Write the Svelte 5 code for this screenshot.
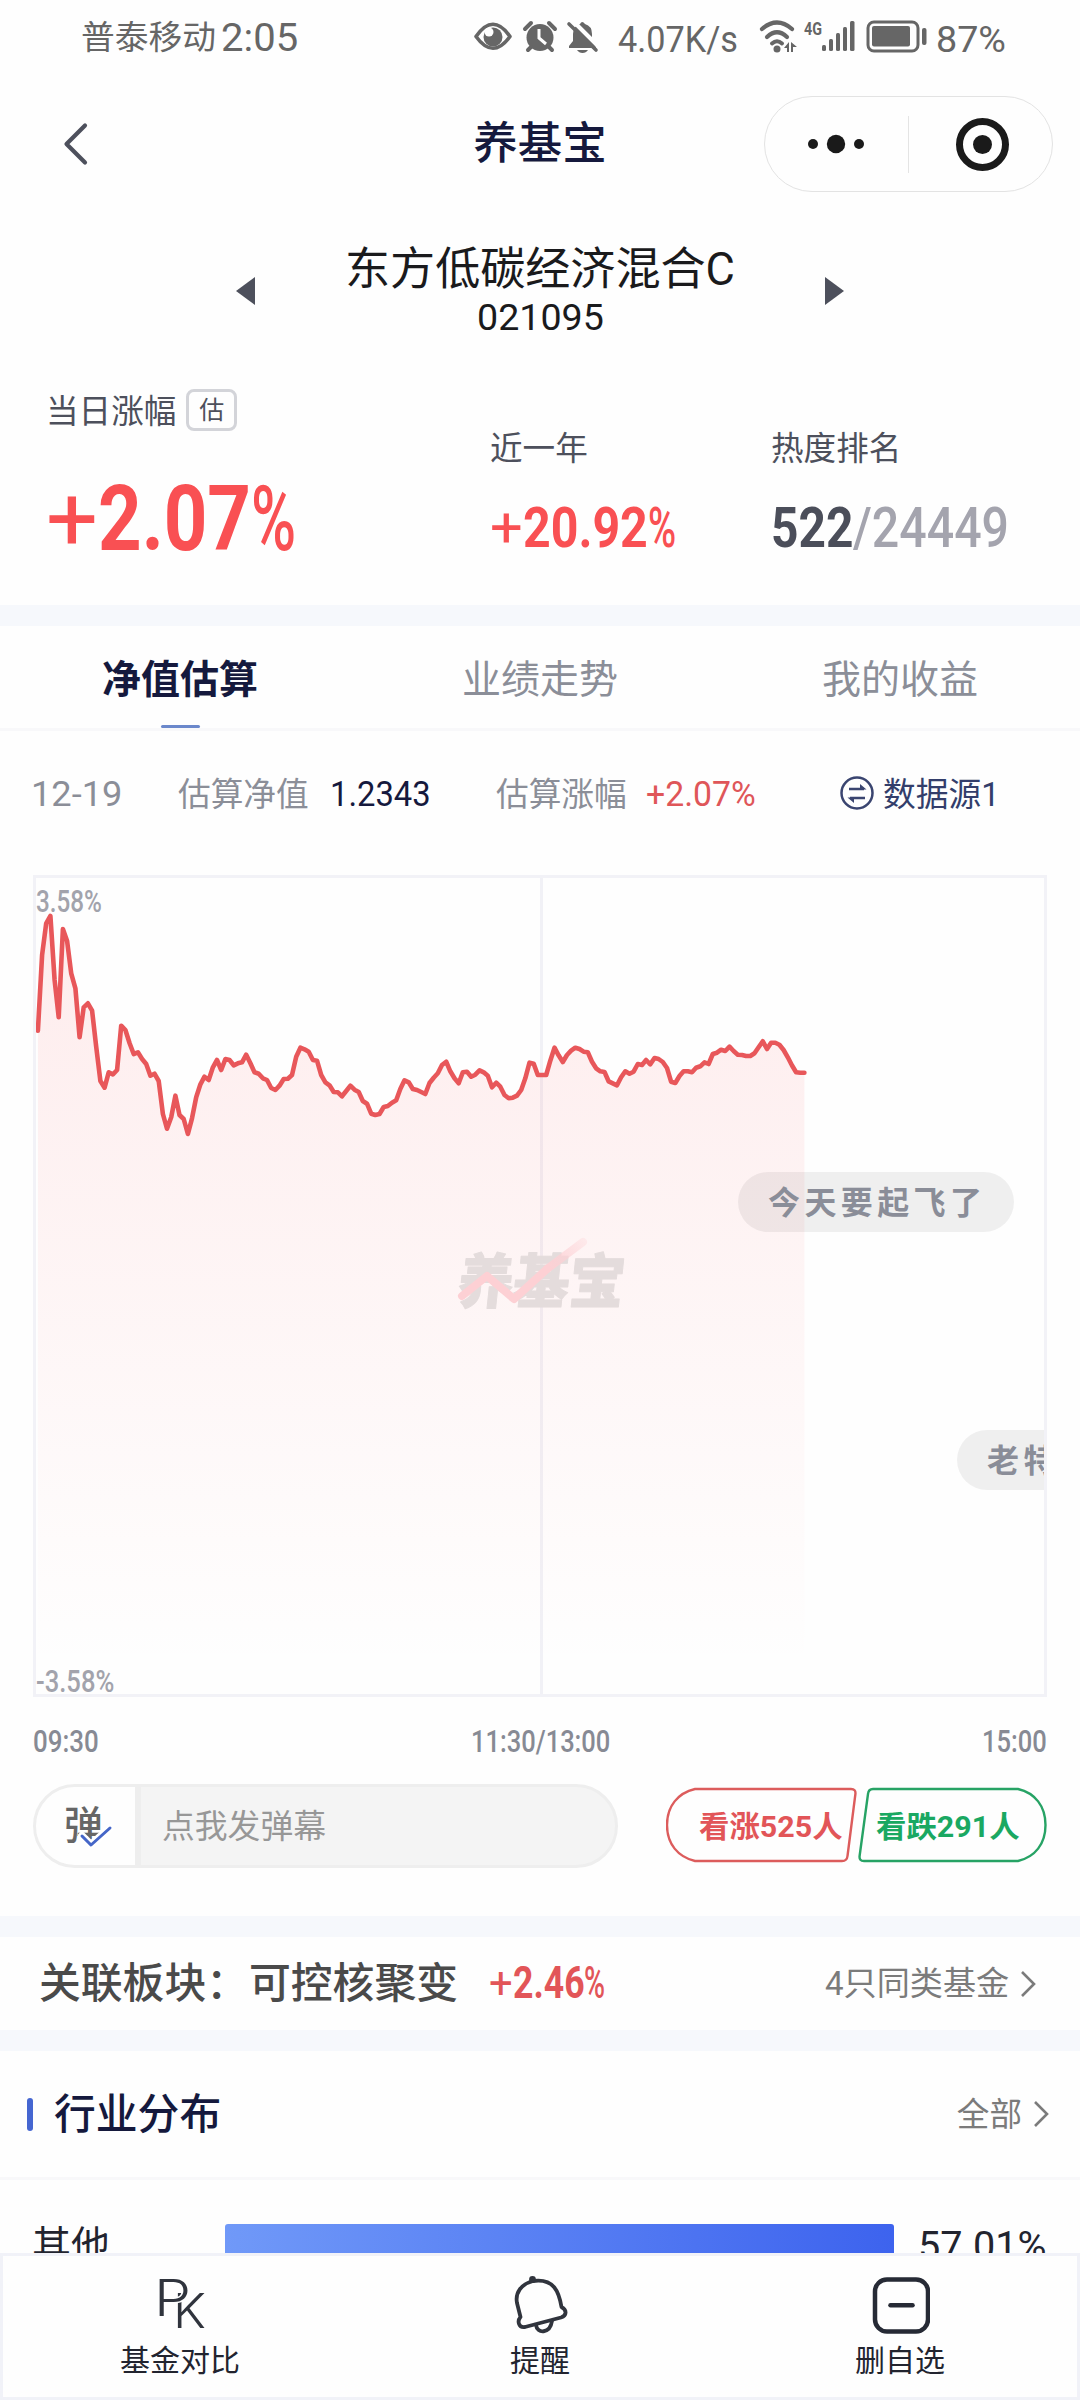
<script lang="ts">
  // Condenses or widens a text run to a set advance width while keeping it in the flow.
  function fit(node: HTMLElement, width: number) {
    const natural = node.offsetWidth;
    node.style.transform = `scaleX(${width / natural})`;
    node.style.marginRight = `${width - natural}px`;
  }

  // One sample per trading minute, in thirds of a pixel from the series origin.
  const samples = [
    512, 285, 190, 168, 360, 472, 207, 243, 340, 385, 532, 442, 430, 452, 560, 663, 683, 637, 643, 630,
    497, 510, 550, 582, 577, 597, 612, 647, 641, 663, 762, 806, 772, 707, 765, 777, 822, 775, 712, 673,
    650, 660, 622, 600, 630, 597, 600, 616, 610, 607, 584, 610, 637, 641, 655, 660, 684, 690, 677, 657,
    656, 645, 590, 563, 568, 575, 600, 602, 645, 667, 676, 696, 697, 709, 693, 677, 689, 696, 723, 731,
    761, 765, 762, 741, 738, 728, 721, 687, 661, 667, 687, 690, 696, 702, 669, 653, 640, 615, 605, 634,
    655, 670, 637, 635, 650, 644, 631, 637, 647, 682, 668, 680, 705, 715, 713, 707, 690, 655, 608, 611,
    645, 645, 645, 602, 563, 586, 606, 585, 572, 563, 567, 575, 577, 605, 625, 634, 636, 664, 670, 676,
    652, 634, 641, 635, 612, 615, 600, 613, 594, 597, 606, 624, 665, 669, 648, 634, 634, 637, 623, 619,
    607, 612, 582, 578, 569, 573, 560, 573, 584, 585, 588, 588, 580, 562, 544, 567, 548, 548, 554, 570,
    592, 616, 637, 638, 638
  ];
  const points = samples
    .map((v, i) => `${(1.9 + i * 4.166).toFixed(1)},${(v / 3 - 18).toFixed(1)}`)
    .join(' ');
  const area = `1.9,816 ${points} 768.5,816`;
  const tabs = ['净值估算', '业绩走势', '我的收益'];
</script>

<div class="page">
  <main>
    <div class="status">
      <span class="carrier" use:fit={135}>普泰移动</span>
      <span class="clock" use:fit={77}>2:05</span>
      <svg class="sys" viewBox="470 4 540 64" width="540" height="64">
        <g fill="none" stroke="#666" stroke-width="3.6">
          <path d="M476 36.500Q493 12 510 36.500Q493 60 476 36.500Z" stroke-linejoin="round" />
        </g>
        <circle cx="493" cy="37" r="9.500" fill="#666" />
        <circle cx="489" cy="32" r="4.500" fill="#fefefe" />
        <circle cx="540" cy="37.500" r="13.500" fill="#666" />
        <path d="M525 29L531 23M549 23L555 29M531 47L528 50M549 47L552 50" stroke="#666" stroke-width="4" stroke-linecap="round" />
        <path d="M539 29V38L546 44" fill="none" stroke="#fefefe" stroke-width="3" />
        <path d="M569 48V46L573 41V34Q573 26 580 24Q582 20 585 24Q592 26 592 34V41L596 47V48Z" fill="#666" />
        <path d="M577 50H588Q586 53 582.500 53Q579 53 577 50Z" fill="#666" />
        <path d="M572 20L600 48" stroke="#fefefe" stroke-width="4" />
        <path d="M569 24L596 50" stroke="#666" stroke-width="3.600" stroke-linecap="round" />
        <g fill="none" stroke="#666" stroke-width="4.200" stroke-linecap="round">
          <path d="M762 29Q777 16 792 29" />
          <path d="M767 37Q777 27.500 787 37" />
          <path d="M772 43.500Q777 39 782 43.500" stroke-width="4" />
        </g>
        <circle cx="777" cy="49" r="3.500" fill="#666" />
        <path d="M784 48L789 42V52H787V48ZM791 42L797 47H793V52H791Z" fill="#666" />
        <g fill="#666">
          <rect x="822" y="45" width="4" height="6" rx="1.500" />
          <rect x="829" y="39" width="4" height="12" rx="1.500" />
          <rect x="836" y="33" width="4" height="18" rx="1.500" />
          <rect x="843" y="27" width="4" height="24" rx="1.500" />
          <rect x="850" y="21" width="4.500" height="30" rx="1.500" />
          <rect x="872" y="26" width="38" height="20.500" rx="2" />
          <rect x="922" y="28" width="4.500" height="17" rx="2" />
        </g>
        <rect x="868" y="22" width="50" height="29" rx="6" fill="none" stroke="#666" stroke-width="3" />
        <text x="618" y="51.500" textLength="120" lengthAdjust="spacingAndGlyphs" font-size="37">4.07K/s</text>
        <text x="804" y="34.500" textLength="18" lengthAdjust="spacingAndGlyphs" font-size="18" font-weight="700">4G</text>
        <text x="936" y="51.500" textLength="70" lengthAdjust="spacingAndGlyphs" font-size="37">87%</text>
      </svg>
    </div>

    <header>
      <svg class="back" width="30" height="48" viewBox="0 0 30 48"><path d="M25 5.500L6.500 24L25 42.500" fill="none" stroke="#4d505c" stroke-width="4.200" stroke-linecap="round" stroke-linejoin="round" /></svg>
      <h1>养基宝</h1>
      <div class="capsule">
        <svg width="287" height="94" viewBox="765 97 287 94">
          <g fill="#1a1a1a"><circle cx="813" cy="144" r="5" /><circle cx="836" cy="144" r="9.200" /><circle cx="859" cy="144" r="5" /><circle cx="982.500" cy="144.500" r="9.500" /></g>
          <circle cx="982.500" cy="144.500" r="23" fill="none" stroke="#1a1a1a" stroke-width="7" />
          <path d="M908.500 116V173" stroke="#e4e4e4" />
        </svg>
      </div>
    </header>

    <section class="fund">
      <svg width="19" height="28" viewBox="0 0 19 28"><path d="M19 0V28L0 14Z" fill="#4d505c" /></svg>
      <div class="fund-name">
        <h2><span use:fit={390}>东方低碳经济混合C</span></h2>
        <p><span use:fit={127}>021095</span></p>
      </div>
      <svg width="19" height="28" viewBox="0 0 19 28"><path d="M0 0V28L19 14Z" fill="#4d505c" /></svg>
    </section>

    <section class="stats">
      <div class="today">
        <div class="label">当日涨幅<span class="badge">估</span></div>
        <div class="big up"><span class="plus" use:fit={52}>+</span><span use:fit={153}>2.07</span><span class="sign" use:fit={45}>%</span></div>
      </div>
      <div class="stat">
        <div class="label">近一年</div>
        <div class="mid up"><span class="plus" use:fit={33}>+</span><span use:fit={125}>20.92</span><span class="sign" use:fit={28}>%</span></div>
      </div>
      <div class="stat">
        <div class="label">热度排名</div>
        <div class="mid rank"><span use:fit={82}>522</span><span class="total" use:fit={156}>/24449</span></div>
      </div>
    </section>

    <nav class="tabs">
      {#each tabs as tab, i}
        <div class="tab" class:active={i === 0}>{tab}</div>
      {/each}
    </nav>

    <section class="info">
      <span class="date"><span use:fit={91}>12-19</span></span>
      <span class="key">估算净值</span>
      <span class="nav-value"><span use:fit={101}>1.2343</span></span>
      <span class="key">估算涨幅</span>
      <span class="rise"><span use:fit={110}>+2.07%</span></span>
      <span class="source">
        <svg width="34" height="34" viewBox="0 0 34 34" fill="none" stroke="#3a4570" stroke-width="2.500"><circle cx="17" cy="17" r="15.500" /><path d="M9 13H24M25 22H10" /><path d="M20 8L26.500 13.500H20ZM14 27L7.500 21.500H14Z" fill="#3a4570" stroke="none" /></svg>
        <span class="source-name" use:fit={117}>数据源1</span>
      </span>
    </section>

    <section class="chart">
      <svg class="plot" width="1008" height="816" viewBox="0 0 1008 816">
        <defs>
          <linearGradient id="fill" gradientUnits="userSpaceOnUse" x1="0" y1="38" x2="0" y2="790">
            <stop offset="0" stop-color="#fb4b50" stop-opacity=".1" />
            <stop offset=".45" stop-color="#fb4b50" stop-opacity=".055" />
            <stop offset="1" stop-color="#fb4b50" stop-opacity="0" />
          </linearGradient>
          <linearGradient id="tail" gradientUnits="userSpaceOnUse" x1="511" y1="390" x2="549" y2="362">
            <stop offset="0" stop-color="#fdd0d4" />
            <stop offset="1" stop-color="#fdd0d4" stop-opacity=".3" />
          </linearGradient>
        </defs>
        <path d="M505.500 0V816" stroke="#f1f1f6" stroke-width="3" />
        <polygon points={area} fill="url(#fill)" />
        <text class="brand" transform="translate(420 425) skewX(-6)" textLength="167" lengthAdjust="spacingAndGlyphs">养基宝</text>
        <path d="M426 418L451 398L478 421L511 391" fill="none" stroke="#fdd0d4" stroke-width="8" stroke-linecap="round" stroke-linejoin="round" />
        <path d="M511 391L547 364" fill="none" stroke="url(#tail)" stroke-width="8" stroke-linecap="round" />
        <polyline points={points} fill="none" stroke="#e8575a" stroke-width="4.600" stroke-linejoin="round" stroke-linecap="round" />
      </svg>
      <span class="limit top"><span use:fit={66}>3.58%</span></span>
      <span class="limit bottom"><span use:fit={78}>-3.58%</span></span>
      <span class="bubble first">今天要起飞了</span>
      <span class="bubble second">老特</span>
    </section>

    <div class="axis">
      <span><span use:fit={66}>09:30</span></span>
      <span><span use:fit={139}>11:30/13:00</span></span>
      <span><span use:fit={65}>15:00</span></span>
    </div>

    <section class="actions">
      <div class="comment">
        <div class="toggle">
          <span>弹</span>
          <svg width="36" height="26" viewBox="0 0 36 26" fill="none" stroke-linecap="round" stroke-linejoin="round"><path d="M4 13L13 22L32 5" stroke="#fff" stroke-width="8" /><path d="M4 13L13 22L32 5" stroke="#4566c8" stroke-width="3" /></svg>
        </div>
        <div class="placeholder">点我发弹幕</div>
      </div>
      <div class="vote bull">
        <svg width="191" height="76" viewBox="0 0 191 76"><path d="M29 2H185Q190 2 189.400 7L181.500 69Q181 74 176 74H29C12 70 1 57 1 38C1 19 12 6 29 2Z" fill="none" stroke="#dc5c5c" stroke-width="2.400" /></svg>
        <span use:fit={144}>看涨525人</span>
      </div>
      <div class="vote bear">
        <svg width="189" height="76" viewBox="0 0 189 76"><path d="M160 2H15Q10.500 2 10 7L1.600 69Q1 74 6 74H160C177 70 187.500 57 187.500 38C187.500 19 177 6 160 2Z" fill="none" stroke="#27a365" stroke-width="2.400" /></svg>
        <span use:fit={144}>看跌291人</span>
      </div>
    </section>

    <section class="related">
      <span class="sector-key">关联板块：</span>
      <span class="sector">可控核聚变</span>
      <span class="sector-rise"><span class="plus" use:fit={24}>+</span><span use:fit={72}>2.46</span><span class="sign" use:fit={21}>%</span></span>
      <span class="more"><span use:fit={184}>4只同类基金</span>
        <svg width="18" height="30" viewBox="0 0 18 30"><path d="M3 3L15 15L3 27" fill="none" stroke="#7b7b7b" stroke-width="2.600" /></svg>
      </span>
    </section>

    <section class="heading">
      <i></i>
      <h3>行业分布</h3>
      <span class="more"><span>全部</span>
        <svg width="18" height="30" viewBox="0 0 18 30"><path d="M3 3L15 15L3 27" fill="none" stroke="#7b7b7b" stroke-width="2.600" /></svg>
      </span>
    </section>

    <section class="industry">
      <span class="name">其他</span>
      <div class="bar"></div>
      <span class="share"><span use:fit={129}>57.01%</span></span>
    </section>
  </main>

  <nav class="dock">
    <div class="item">
      <svg width="60" height="60" viewBox="150 2275 60 60">
        <text class="pk" x="173" y="2328" textLength="33" lengthAdjust="spacingAndGlyphs" font-size="48">K</text>
        <text class="pk halo" x="154" y="2316" textLength="37" lengthAdjust="spacingAndGlyphs" font-size="50">P</text>
      </svg>
      <span>基金对比</span>
    </div>
    <div class="item">
      <svg width="60" height="60" viewBox="511 2275 60 60" fill="none" stroke="#30343d" stroke-width="3.800" stroke-linejoin="round" stroke-linecap="round">
        <path d="M534 2281C522 2284 516 2293 518 2303L521.500 2317C518 2321 519.500 2328 526 2327L562 2317.500C568 2315.500 568 2310 562.500 2307C560 2292 555 2278 534 2281Z" />
        <path d="M537 2325C538 2334 551 2334 553 2321" />
        <circle cx="533.500" cy="2279.500" r="1.500" fill="#30343d" />
      </svg>
      <span>提醒</span>
    </div>
    <div class="item">
      <svg width="60" height="60" viewBox="0 0 60 60" fill="none" stroke="#262a35" stroke-width="4.500">
        <rect x="5" y="4.500" width="53" height="52" rx="12" /><path d="M20.500 30.300H42.500" stroke-linecap="round" />
      </svg>
      <span>删自选</span>
    </div>
  </nav>
</div>

<style>
  :global(body) { background: #fefefe; }
  * { box-sizing: border-box; }
  .page {
    width: 1080px;
    height: 2400px;
    overflow: hidden;
    background: #fefefe;
    color: #22242f;
    font-family: Roboto, "Noto Sans CJK SC", sans-serif;
    white-space: nowrap;
  }
  span { display: inline-block; transform-origin: left center; flex-shrink: 0; }
  svg { display: block; flex-shrink: 0; }
  h1, h2, h3, p { margin: 0; font-weight: 400; }
  main { height: 2253px; overflow: hidden; }
  .up { color: #f95053; }

  .status { height: 76px; display: flex; align-items: center; padding-left: 81px; color: #666; line-height: 78px; }
  .carrier { font-size: 33.5px; }
  .clock { font-size: 39.5px; margin-left: 5px; }
  .sys { margin-left: auto; margin-right: 70px; margin-bottom: 4px; fill: #666; }

  header { height: 136px; display: grid; grid-template-columns: 316px 1fr 316px; align-items: center; }
  .back { margin-left: 60px; }
  h1 { text-align: center; font-size: 44.5px; font-weight: 500; line-height: 62px; color: #15193d; }
  .capsule { width: 289px; height: 96px; border: 1px solid #e3e3e3; border-radius: 48px; }

  .fund { width: 608px; height: 128px; margin: 0 auto; padding-top: 29px; display: flex; justify-content: space-between; align-items: center; }
  .fund-name { text-align: center; color: #1a1a1c; }
  h2 { font-size: 45.3px; line-height: 58px; }
  .fund-name p { margin-top: -4px; font-size: 37px; line-height: 45px; }

  .stats { height: 265px; display: grid; grid-template-columns: 444px 281px 1fr; padding-left: 46px; color: #4d505c; }
  .today { padding-top: 49px; }
  .label { display: flex; align-items: center; height: 42px; padding-top: 1px; font-size: 32.6px; line-height: 42px; }
  .today .label { padding-top: 3px; }
  .badge { margin: -3px 0 0 10px; width: 51px; height: 42px; border: 3px solid #d3d4d9; border-radius: 8px; text-align: center; font-size: 25px; line-height: 38px; }
  .big, .mid { display: flex; font-weight: 700; }
  .big { margin-top: 39px; font-size: 90px; line-height: 100px; }
  .sign { font-weight: 500; }
  .plus { font-weight: 400; }
  .stat { padding-top: 87px; }
  .mid { margin-top: 29px; font-size: 56px; line-height: 60px; }
  .rank { color: #4b4e5a; }
  .total { color: #a4a4ae; font-weight: 500; }

  .tabs { height: 126px; border-top: 21px solid #f6f8fc; border-bottom: 3px solid #f8f8fa; display: grid; grid-template-columns: repeat(3, 1fr); }
  .tab { display: flex; flex-direction: column; align-items: center; line-height: 97px; padding-top: 6px; height: 102px; font-size: 39px; color: #8b8e98; }
  .active { color: #15193d; font-weight: 700; }
  .active::after { content: ''; width: 39px; height: 3px; margin-top: -4px; border-radius: 2px; background: #6b88cb; }

  .info { height: 144px; padding-bottom: 17px; display: grid; grid-template-columns: 147px 152px 166px 150px 194px 1fr; align-items: center; padding-left: 31px; font-size: 35px; line-height: 44px; color: #8b8e98; }
  .key { font-size: 32.7px; line-height: 46px; }
  .nav-value { color: #15193d; }
  .rise { color: #df5659; }
  .source { display: flex; align-items: center; gap: 9px; padding-bottom: 3px; color: #333e6b; font-size: 33px; }
  .source-name { margin-top: 4px; }

  .chart { position: relative; width: 1014px; height: 822px; margin-left: 33px; border: 3px solid #f2f2f7; overflow: hidden; }
  .brand { font-family: "Noto Sans CJK SC", sans-serif; font-weight: 900; font-size: 59px; fill: #e4dcdc; stroke: #e4dcdc; stroke-width: 1px; stroke-linejoin: round; }
  .limit { position: absolute; left: 0; font-size: 30.5px; line-height: 30px; font-weight: 500; color: #a2a3ac; }
  .top { top: 9px; }
  .bottom { bottom: -3px; }
  .bubble { position: absolute; height: 60px; border-radius: 30px; padding: 0 30px; background: rgba(0, 0, 0, .06); color: #8a8d98; font-size: 32px; line-height: 62px; font-weight: 700; letter-spacing: 4.4px; }
  .first { top: 294px; left: 702px; width: 276px; }
  .second { top: 552px; left: 921px; }

  .axis { height: 87px; padding: 0 33px; display: flex; justify-content: space-between; font-size: 31px; line-height: 89px; font-weight: 500; color: #878a94; }

  .actions { height: 132px; padding: 0 33px; display: flex; align-items: flex-start; }
  .comment { width: 585px; height: 84px; border: 3px solid #eee; border-radius: 42px; overflow: hidden; display: flex; line-height: 80px; background: #f4f4f4; }
  .toggle { width: 105px; background: #fefefe; border-right: 6px solid #eee; padding-left: 28px; display: flex; color: #666; font-size: 39px; line-height: 78px; font-weight: 500; }
  .toggle svg { margin: 36px 0 0 -25px; }
  .placeholder { padding-left: 21px; font-size: 32.8px; color: #979797; }
  .vote { display: grid; justify-items: start; margin-top: 3px; font-size: 30px; font-weight: 700; line-height: 79px; }
  .vote > * { grid-area: 1 / 1; }
  .bull { margin-left: 48px; width: 191px; color: #e25558; }
  .bull span { margin-left: 33px; }
  .bear { margin-left: 1px; width: 189px; color: #1aa862; }
  .bear span { margin-left: 18px; }

  .related { height: 114px; border-top: 21px solid #f6f8fc; display: flex; align-items: center; padding: 0 43px 0 39px; color: #4a4a4a; font-size: 41.8px; font-weight: 500; line-height: 62px; }
  .sector-key { width: 210px; padding-top: 1px; }
  .sector { width: 240px; padding-top: 1px; }
  .sector-rise { display: flex; color: #e25558; font-size: 43.5px; font-weight: 700; }
  .more { display: flex; align-items: center; gap: 10px; margin-left: auto; color: #7b7b7b; font-size: 32.6px; font-weight: 400; line-height: 46px; }
  .more span { padding-top: 1px; }
  .heading { height: 150px; border-top: 21px solid #f6f8fc; border-bottom: 3px solid #f8f8fa; display: flex; align-items: center; padding: 0 30px 0 27px; }
  .heading i { width: 6px; height: 33px; border-radius: 3px; background: #4566d1; }
  h3 { margin-left: 21px; padding-top: 2px; font-size: 41.8px; line-height: 60px; font-weight: 500; color: #15193d; }

  .industry { height: 132px; padding-left: 32px; display: grid; grid-template-columns: 193px 669px 1fr; align-items: center; }
  .name { font-size: 39px; line-height: 46px; }
  .bar { height: 44px; border-radius: 3px; background: linear-gradient(90deg, #7099f8, #3d63ee); }
  .share { margin-left: 24px; font-size: 39px; }

  .dock { height: 147px; border: 3px solid #f1f2f8; display: grid; grid-template-columns: repeat(3, 360px); justify-content: center; background: #fefefe; }
  .item { display: flex; flex-direction: column; align-items: center; padding-top: 19px; font-size: 30px; line-height: 40px; }
  .item span { margin-top: 6px; }
  .pk { font-family: Inter, sans-serif; font-weight: 300; fill: #30343d; }
  .halo { stroke: #fefefe; stroke-width: 3px; paint-order: stroke; }
</style>
